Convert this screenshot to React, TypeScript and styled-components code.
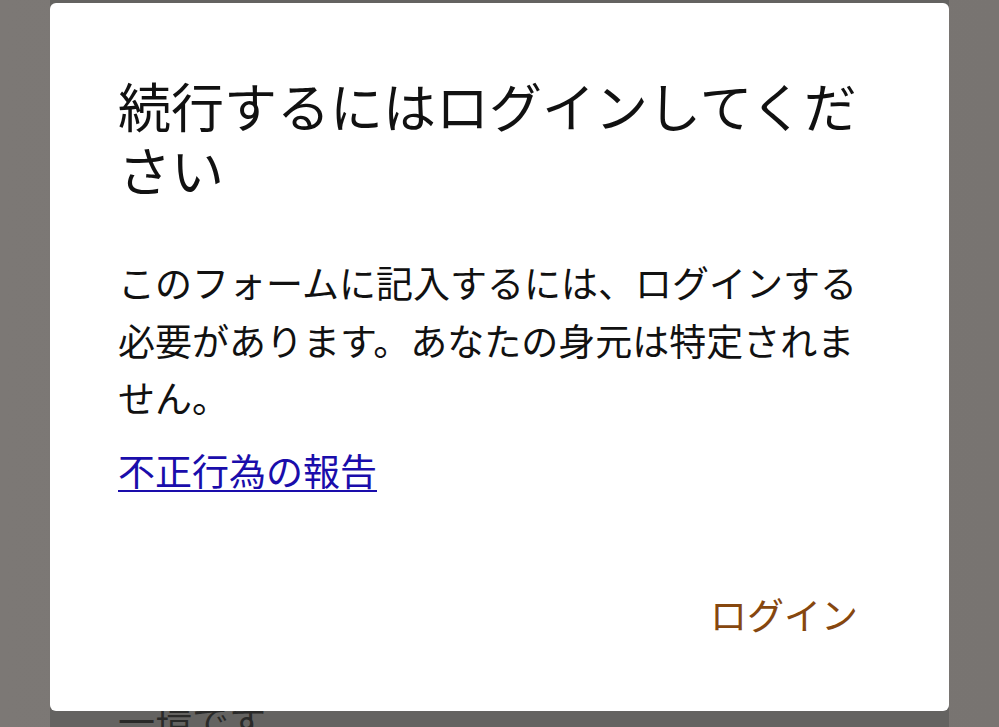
import React from 'react';
import styled, { createGlobalStyle } from 'styled-components';

const GlobalStyle = createGlobalStyle`
  html, body {
    margin: 0;
    padding: 0;
    height: 100%;
    overflow: hidden;
  }
  body {
    font-family: "Noto Sans CJK JP", "Noto Sans", sans-serif;
    background: #7a7673;
  }
`;

const Backdrop = styled.div`
  height: 100vh;
  display: grid;
  grid-template-columns: 50px 1fr 50px;
  background: linear-gradient(90deg, #7c7875 0%, #787471 100%);
`;

const PageColumn = styled.main`
  grid-column: 2;
  background: #646361;
  display: flex;
  flex-direction: column;
  justify-content: space-between;
  padding: 0 68px;
  overflow: hidden;
`;

const PageText = styled.p<{ $edge: 'top' | 'bottom' }>`
  margin: 0;
  font-size: 37px;
  line-height: 57px;
  color: #2a2a29;
  margin-top: ${p => (p.$edge === 'top' ? '-54px' : '0')};
  margin-bottom: ${p => (p.$edge === 'bottom' ? '-22px' : '0')};
  padding-left: ${p => (p.$edge === 'top' ? '60px' : '0')};
`;

const Overlay = styled.div`
  position: fixed;
  inset: 0;
  display: flex;
  justify-content: center;
  align-items: flex-start;
  padding-top: 3px;
`;

const Dialog = styled.section`
  width: 899px;
  height: 708px;
  box-sizing: border-box;
  background: #ffffff;
  border-radius: 6px;
  padding: 70px 81px 68px 68px;
  display: flex;
  flex-direction: column;
`;

const Title = styled.h2`
  margin: 0;
  font-size: 53px;
  line-height: 64px;
  font-weight: 400;
  color: #111111;
`;

const Body = styled.p`
  margin: 53px 0 0;
  font-size: 37px;
  line-height: 57.5px;
  color: #111111;
`;

const LinkRow = styled.p`
  margin: 15px 0 0;
  font-size: 37px;
  line-height: 57.5px;
`;

const ReportLink = styled.a`
  color: #1a0dab;
  text-decoration: underline;
  text-underline-offset: 4px;
  text-decoration-thickness: 2px;
`;

const Actions = styled.div`
  margin-top: auto;
  display: flex;
  justify-content: flex-end;
`;

const TextButton = styled.button`
  border: none;
  background: transparent;
  padding: 0 10px;
  font-family: inherit;
  font-size: 37px;
  line-height: 57px;
  color: #86470f;
  cursor: pointer;
`;

export default function App() {
  return (
    <>
      <GlobalStyle />
      <Backdrop>
        <PageColumn>
          <PageText $edge="top">このアンケートはサービス改善の</PageText>
          <PageText $edge="bottom">一環です。</PageText>
        </PageColumn>
      </Backdrop>
      <Overlay>
        <Dialog role="dialog" aria-modal="true">
          <Title>続行するにはログインしてください</Title>
          <Body>このフォームに記入するには、ログインする必要があります。あなたの身元は特定されません。</Body>
          <LinkRow>
            <ReportLink href="#">不正行為の報告</ReportLink>
          </LinkRow>
          <Actions>
            <TextButton type="button">ログイン</TextButton>
          </Actions>
        </Dialog>
      </Overlay>
    </>
  );
}
